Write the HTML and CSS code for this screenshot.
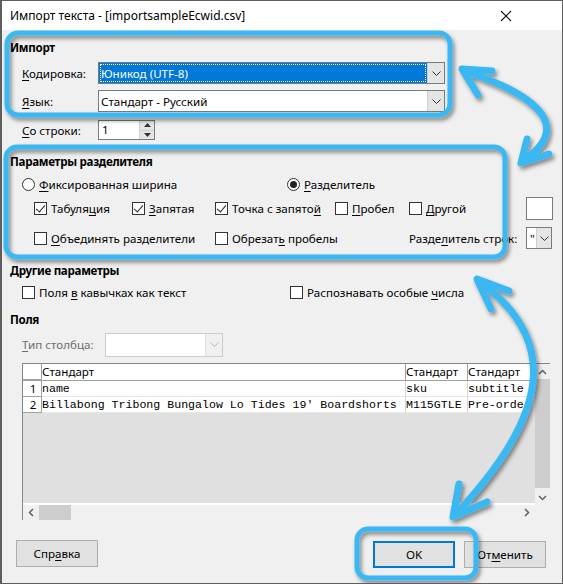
FILE: index.html
```html
<!DOCTYPE html>
<html lang="ru">
<head>
<meta charset="utf-8">
<title>Импорт текста</title>
<link rel="stylesheet" href="styles.css">
</head>
<body>
<div class="window">
  <div class="titlebar">
    <span class="title">Импорт текста - [importsampleEcwid.csv]</span>
    <svg class="close" width="12" height="12" viewBox="0 0 12 12"><path d="M1 1 L11 11 M11 1 L1 11" stroke="#111" stroke-width="1.1" fill="none"/></svg>
  </div>
  <div class="body">
    <div class="hdr hdr-import">Импорт</div>
    <div class="row row-enc">
      <span class="lbl"><u>К</u>одировка:</span>
      <div class="select sel-wide sel-focus">
        <span class="sel-text"><span class="focus-ring">Юникод (UTF-8)</span></span>
        <span class="sel-btn"><svg width="9" height="5" viewBox="0 0 9 5"><path d="M0.5 0.5 L4.5 4.5 L8.5 0.5" stroke="#333" fill="none"/></svg></span>
      </div>
    </div>
    <div class="row row-lang">
      <span class="lbl"><u>Я</u>зык:</span>
      <div class="select sel-wide">
        <span class="sel-text">Стандарт - Русский</span>
        <span class="sel-btn"><svg width="9" height="5" viewBox="0 0 9 5"><path d="M0.5 0.5 L4.5 4.5 L8.5 0.5" stroke="#333" fill="none"/></svg></span>
      </div>
    </div>
    <div class="row row-spin">
      <span class="lbl"><u>С</u>о строки:</span>
      <div class="spin">
        <span class="spin-text">1</span>
        <span class="spin-btns">
          <span class="spin-b"><svg width="7" height="4" viewBox="0 0 7 4"><path d="M0 4 L3.5 0 L7 4Z" fill="#333"/></svg></span>
          <span class="spin-b"><svg width="7" height="4" viewBox="0 0 7 4"><path d="M0 0 L3.5 4 L7 0Z" fill="#333"/></svg></span>
        </span>
      </div>
    </div>

    <div class="hdr hdr-sep">Параметры разделителя</div>
    <div class="row row-radio">
      <span class="opt opt-fixed"><span class="radio"></span><span><u>Ф</u>иксированная ширина</span></span>
      <span class="opt"><span class="radio radio-on"></span><span><u>Р</u>азделитель</span></span>
    </div>
    <div class="sepgrid">
      <span class="opt"><span class="cb cb-on"></span><span>Табуля<u>ц</u>ия</span></span>
      <span class="opt"><span class="cb cb-on"></span><span><u>З</u>апятая</span></span>
      <span class="opt"><span class="cb cb-on"></span><span>Точка с запято<u>й</u></span></span>
      <span class="opt"><span class="cb"></span><span><u>П</u>робел</span></span>
      <span class="opt"><span class="cb"></span><span><u>Д</u>ругой</span></span>
      <span class="txtbox"></span>
      <span class="opt span2"><span class="cb"></span><span><u>О</u>бъединять разделители</span></span>
      <span class="opt span2"><span class="cb"></span><span>Обрезат<u>ь</u> пробелы</span></span>
      <span class="lbl-str"><span>Разде<u>л</u>итель строк:</span></span>
      <div class="select sel-small">
        <span class="sel-text">"</span>
        <span class="sel-btn"><svg width="9" height="5" viewBox="0 0 9 5"><path d="M0.5 0.5 L4.5 4.5 L8.5 0.5" stroke="#333" fill="none"/></svg></span>
      </div>
    </div>

    <div class="hdr hdr-other">Другие параметры</div>
    <div class="row row-other">
      <span class="opt opt-quoted"><span class="cb"></span><span>Поля <u>в</u> кавычках как текст</span></span>
      <span class="opt"><span class="cb"></span><span>Распознавать особые <u>ч</u>исла</span></span>
    </div>

    <div class="hdr hdr-fields">Поля</div>
    <div class="row row-type">
      <span class="lbl lbl-dis"><u>Т</u>ип столбца:</span>
      <div class="select sel-dis">
        <span class="sel-text"></span>
        <span class="sel-btn"><svg width="9" height="5" viewBox="0 0 9 5"><path d="M0.5 0.5 L4.5 4.5 L8.5 0.5" stroke="#b5b5b5" fill="none"/></svg></span>
      </div>
    </div>

    <div class="table">
      <div class="grid">
        <div class="trow thead">
          <span class="c cn"></span>
          <span class="c c1">Стандарт</span>
          <span class="c c2">Стандарт</span>
          <span class="c c3 c3h">Стандарт</span>
        </div>
        <div class="trow tdata">
          <span class="c cn">1</span>
          <span class="c c1 mono">name</span>
          <span class="c c2 mono">sku</span>
          <span class="c c3 mono">subtitle</span>
        </div>
        <div class="trow tdata">
          <span class="c cn">2</span>
          <span class="c c1 mono">Billabong Tribong Bungalow Lo Tides 19' Boardshorts</span>
          <span class="c c2 mono">M115GTLE</span>
          <span class="c c3 mono">Pre-order</span>
        </div>
      </div>
      <div class="vscroll">
        <span class="arr"><svg width="9" height="6" viewBox="0 0 9 6"><path d="M1 5 L4.5 1.5 L8 5" stroke="#606060" stroke-width="1.5" fill="none"/></svg></span>
        <span class="vthumb"></span>
        <span class="arr"><svg width="9" height="6" viewBox="0 0 9 6"><path d="M1 1 L4.5 4.5 L8 1" stroke="#606060" stroke-width="1.5" fill="none"/></svg></span>
      </div>
      <div class="hscroll">
        <span class="harr"><svg width="6" height="9" viewBox="0 0 6 9"><path d="M5 1 L1.5 4.5 L5 8" stroke="#606060" stroke-width="1.5" fill="none"/></svg></span>
        <span class="hthumb"></span>
        <span class="hfill"></span>
        <span class="harr"><svg width="6" height="9" viewBox="0 0 6 9"><path d="M1 1 L4.5 4.5 L1 8" stroke="#606060" stroke-width="1.5" fill="none"/></svg></span>
      </div>
      <div class="corner"></div>
    </div>

    <div class="buttons">
      <span class="btn btn-help"><span>Спр<u>а</u>вка</span></span>
      <span class="spacer"></span>
      <span class="btn btn-ok">OK</span>
      <span class="btn btn-cancel"><span>От<u>м</u>енить</span></span>
    </div>
  </div>

  <svg class="overlay" width="563" height="584" viewBox="0 0 563 584">
    <defs>
      <filter id="sh" x="-20%" y="-20%" width="140%" height="140%">
        <feDropShadow dx="2" dy="3" stdDeviation="2" flood-color="#000" flood-opacity="0.45"/>
      </filter>
    </defs>
    <g fill="none" stroke="#3ab8f1" stroke-width="5" filter="url(#sh)">
      <rect x="7" y="33" width="443" height="82" rx="11"/>
      <rect x="6" y="147" width="499" height="110" rx="11"/>
      <rect x="357" y="529" width="119" height="49" rx="11"/>
    </g>
    <g fill="none" stroke="#3ab8f1" stroke-width="7" stroke-linecap="round" stroke-linejoin="round" filter="url(#sh)">
      <path d="M464 71 C530 92 578 125 522 161"/>
      <path d="M492 71 L462 69 L478 95"/>
      <path d="M527 139 L521 163 L549 154"/>
      <path d="M479 281 C560 340 550 415 454 516"/>
      <path d="M509 291 L477 279 L491 309"/>
      <path d="M459 484 L453 517 L487 502"/>
    </g>
  </svg>
</div>
</body>
</html>
```

FILE: styles.css
```css
* { box-sizing: border-box; }
html, body { margin: 0; padding: 0; }
body {
  font-family: "Noto Sans", "Open Sans", sans-serif;
  font-size: 11.6px;
  color: #000;
  background: #fff;
}
u { text-decoration: underline; text-underline-offset: 2px; }

.window {
  position: relative;
  width: 563px;
  height: 584px;
  border: 1px solid #5e5e5e;
  border-left-width: 2px;
  background: #f0f0f0;
  overflow: hidden;
}
.titlebar {
  height: 29px;
  background: #fff;
  display: flex;
  align-items: center;
  padding-left: 8px;
  padding-right: 50px;
}
.title { flex: 1; font-size: 12px; }
.close { display: block; }

.body {
  padding-left: 8px;
  padding-right: 16px;
  display: flex;
  flex-direction: column;
}
.hdr {
  height: 20px;
  line-height: 20px;
  font-weight: bold;
  letter-spacing: -0.3px;
}
.hdr-import { margin-top: 8px; }
.hdr-sep { margin-top: 12px; }
.hdr-other { margin-top: 12px; }
.hdr-fields { margin-top: 8px; }

.row {
  display: flex;
  align-items: center;
  padding-left: 12px;
}
.row-enc { margin-top: 4px; height: 22px; }
.row-lang { margin-top: 6px; height: 22px; }
.row-spin { margin-top: 8px; height: 20px; }
.row-radio { margin-top: 2px; height: 20px; }
.row-other { margin-top: 1px; height: 20px; }
.row-type { margin-top: 3px; height: 23px; }

.lbl { width: 76px; flex: none; white-space: nowrap; }
.lbl-dis { width: 83px; color: #6d6d6d; }

.select {
  display: flex;
  height: 22px;
  border: 1px solid #7a7a7a;
  background: #fff;
}
.sel-wide { width: 347px; }
.sel-text {
  flex: 1;
  display: flex;
  align-items: center;
  padding-left: 2px;
  overflow: hidden;
  white-space: nowrap;
}
.sel-btn {
  width: 17px;
  flex: none;
  display: flex;
  align-items: center;
  justify-content: center;
  background: #e5e5e5;
  border-left: 1px solid #cfcfcf;
}
.sel-focus .sel-text {
  background: #0078d7;
  color: #fff;
  padding: 1px;
}
.focus-ring {
  display: flex;
  align-items: center;
  width: 100%;
  height: 100%;
  border: 1px dotted #000;
  outline: 1px dotted #fff;
  outline-offset: -1px;
}
.sel-dis {
  width: 118px;
  height: 24px;
  border-color: #cccccc;
}
.sel-dis .sel-btn { background: #f0f0f0; border-left-color: #e2e2e2; }
.sel-small { width: 26px; height: 22px; }
.sel-small .sel-text { padding-left: 3px; }
.sel-small .sel-btn { width: 15px; }

.spin {
  display: flex;
  width: 57px;
  height: 20px;
  border: 1px solid #7a7a7a;
  background: #fff;
}
.spin-text { flex: 1; padding-left: 3px; line-height: 18px; }
.spin-btns {
  width: 15px;
  display: flex;
  flex-direction: column;
  border-left: 1px solid #cfcfcf;
}
.spin-b {
  flex: 1;
  display: flex;
  align-items: center;
  justify-content: center;
  background: #e5e5e5;
}
.spin-b + .spin-b { border-top: 1px solid #cfcfcf; }

.opt {
  display: flex;
  align-items: center;
  gap: 4px;
  white-space: nowrap;
}
.opt-fixed { width: 265px; }
.opt-quoted { width: 268px; }

.radio {
  width: 13px;
  height: 13px;
  border: 1px solid #333;
  border-radius: 50%;
  background: #fff;
  display: flex;
  align-items: center;
  justify-content: center;
  flex: none;
}
.radio-on::after {
  content: "";
  width: 7px;
  height: 7px;
  border-radius: 50%;
  background: #222;
}
.cb {
  width: 13px;
  height: 13px;
  border: 1px solid #333;
  background: #fff;
  flex: none;
  position: relative;
}
.cb-on::after {
  content: "";
  position: absolute;
  left: 3px;
  top: 0px;
  width: 4px;
  height: 8px;
  border-right: 1px solid #222;
  border-bottom: 1px solid #222;
  transform: rotate(40deg);
}

.sepgrid {
  margin-top: 3px;
  margin-left: 24px;
  display: grid;
  grid-template-columns: 98px 83px 120px 74px 117px 27px;
  grid-template-rows: 23px 22px;
  row-gap: 7px;
  align-items: center;
}
.span2 { grid-column: span 2; }
.lbl-str { grid-column: 5; white-space: nowrap; overflow: hidden; }
.txtbox {
  display: block;
  width: 27px;
  height: 23px;
  border: 1px solid #7a7a7a;
  background: #fff;
}

.table {
  margin-top: 7px;
  margin-left: 12px;
  width: 528px;
  height: 157px;
  border-left: 1px solid #828790;
  border-top: 1px solid #828790;
  display: grid;
  grid-template-columns: 512px 15px;
  grid-template-rows: 141px 15px;
}
.grid {
  background: #e0e0e0;
  border-bottom: 2px solid #fff;
  overflow: hidden;
}
.trow {
  display: flex;
  height: 16px;
}
.thead { background: #fff; border-bottom: 1px solid #a0a0a0; height: 17px; }
.c {
  flex: none;
  height: 100%;
  overflow: hidden;
  white-space: nowrap;
  line-height: 16px;
  border-right: 1px solid #d4d4d4;
  background: #fff;
}
.thead .c { border-right-color: #a0a0a0; }
.cn {
  width: 19px;
  text-align: center;
  border-right: 1px solid #a0a0a0;
  border-bottom: 1px solid #a0a0a0;
  padding-left: 2px;
}
.tdata .c1, .tdata .c2, .tdata .c3 { border-bottom: 1px solid #e8e8e8; }
.c1 { width: 364px; }
.c2 { width: 62px; }
.c3 { width: 63px; }
.c3h { flex: 1; border-right: 0; }
.mono {
  font-family: "Liberation Mono", "DejaVu Sans Mono", monospace;
  font-size: 11.6px;
  line-height: 16px;
}

.vscroll {
  background: #f0f0f0;
  display: flex;
  flex-direction: column;
  align-items: center;
}
.arr {
  height: 15px;
  width: 15px;
  display: flex;
  align-items: center;
  justify-content: center;
  flex: none;
}
.vthumb {
  flex: 1;
  width: 15px;
  background: #cdcdcd;
  margin-bottom: 2px;
}
.hscroll {
  background: #f0f0f0;
  display: flex;
  align-items: stretch;
}
.harr {
  width: 16px;
  display: flex;
  align-items: center;
  justify-content: center;
}
.hthumb { width: 32px; background: #cdcdcd; }
.hfill { flex: 1; }
.corner { background: #f0f0f0; }

.buttons {
  margin-top: 20px;
  display: flex;
  padding-left: 6px;
  height: 28px;
}
.spacer { flex: 1; }
.btn {
  width: 82px;
  height: 27px;
  display: flex;
  align-items: center;
  justify-content: center;
  background: #e1e1e1;
  border: 1px solid #adadad;
  flex: none;
}
.btn-ok {
  border: 2px solid #0078d7;
  margin-top: 1px;
  margin-right: 9px;
}
.btn-cancel { margin-top: 1px; }

.overlay {
  position: absolute;
  left: -2px;
  top: -1px;
  pointer-events: none;
}
```
